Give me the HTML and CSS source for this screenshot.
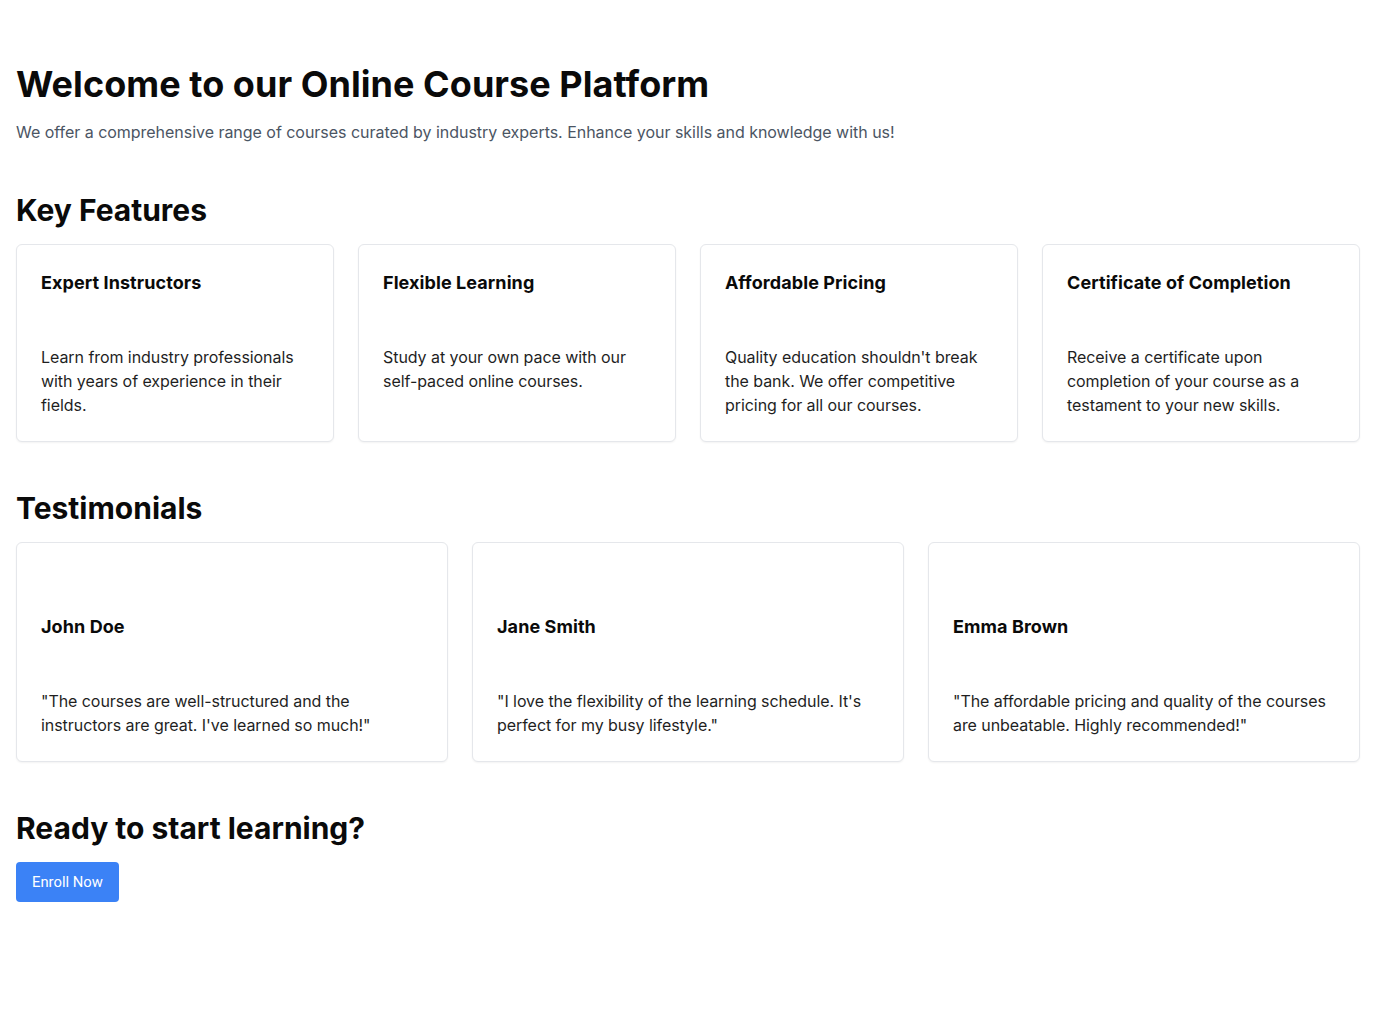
FILE: index.html
```html
<!DOCTYPE html>
<html lang="en">
<head>
<meta charset="utf-8">
<title>Online Course Platform</title>
<link rel="stylesheet" href="styles.css">
</head>
<body>
<main class="page">
  <section class="hero">
    <h1 class="title">Welcome to our Online Course Platform</h1>
    <p class="lead">We offer a comprehensive range of courses curated by industry experts. Enhance your skills and knowledge with us!</p>
  </section>

  <section class="section">
    <h2 class="heading">Key Features</h2>
    <div class="grid grid-4">
      <div class="card">
        <div class="card-header"><h3 class="card-title">Expert Instructors</h3></div>
        <div class="card-content">Learn from industry professionals with years of experience in their fields.</div>
      </div>
      <div class="card">
        <div class="card-header"><h3 class="card-title">Flexible Learning</h3></div>
        <div class="card-content">Study at your own pace with our self-paced online courses.</div>
      </div>
      <div class="card">
        <div class="card-header"><h3 class="card-title">Affordable Pricing</h3></div>
        <div class="card-content">Quality education shouldn't break the bank. We offer competitive pricing for all our courses.</div>
      </div>
      <div class="card">
        <div class="card-header"><h3 class="card-title">Certificate of Completion</h3></div>
        <div class="card-content">Receive a certificate upon completion of your course as a testament to your new skills.</div>
      </div>
    </div>
  </section>

  <section class="section">
    <h2 class="heading">Testimonials</h2>
    <div class="grid grid-3">
      <div class="card">
        <div class="card-header"><span class="avatar"></span><h3 class="card-title">John Doe</h3></div>
        <div class="card-content">"The courses are well-structured and the instructors are great. I've learned so much!"</div>
      </div>
      <div class="card">
        <div class="card-header"><span class="avatar"></span><h3 class="card-title">Jane Smith</h3></div>
        <div class="card-content">"I love the flexibility of the learning schedule. It's perfect for my busy lifestyle."</div>
      </div>
      <div class="card">
        <div class="card-header"><span class="avatar"></span><h3 class="card-title">Emma Brown</h3></div>
        <div class="card-content">"The affordable pricing and quality of the courses are unbeatable. Highly recommended!"</div>
      </div>
    </div>
  </section>

  <section class="section">
    <h2 class="heading">Ready to start learning?</h2>
    <button class="btn" type="button">Enroll Now</button>
  </section>
</main>
</body>
</html>
```

FILE: styles.css
```css
* { box-sizing: border-box; }
html, body { margin: 0; padding: 0; background: #fff; }
body {
  font-family: Inter, "Noto Sans", sans-serif;
  color: #0a0a0a;
}
.page {
  padding: 64px 16px 48px;
  display: flex;
  flex-direction: column;
  gap: 48px;
}
.title {
  margin: 0 0 16px;
  font-size: 36px;
  line-height: 40px;
  font-weight: 700;
  letter-spacing: 0.05px;
}
.lead {
  margin: 0;
  font-size: 16px;
  line-height: 24px;
  color: #4b5563;
  letter-spacing: -0.03px;
}
.heading {
  margin: 0 0 16px;
  font-size: 30px;
  line-height: 36px;
  font-weight: 700;
}
.grid { display: grid; gap: 24px; }
.grid-4 { grid-template-columns: repeat(4, 1fr); }
.grid-3 { grid-template-columns: repeat(3, 1fr); }
.card {
  border: 1px solid #e5e7eb;
  border-radius: 6px;
  background: #fff;
  box-shadow: 0 1px 2px rgba(0,0,0,0.05);
}
.card-header {
  padding: 24px;
  display: flex;
  flex-direction: column;
  gap: 6px;
}
.avatar { display: block; height: 40px; }
.card-title {
  margin: 0;
  font-size: 18px;
  line-height: 28px;
  font-weight: 700;
  letter-spacing: 0.08px;
  color: #0a0a0a;
}
.card-content {
  padding: 24px;
  font-size: 16px;
  line-height: 24px;
  letter-spacing: -0.06px;
  color: #1f1f1f;
}
.btn {
  align-self: flex-start;
  height: 40px;
  padding: 0 16px;
  border: 0;
  border-radius: 4px;
  background: #3b82f6;
  color: #fff;
  font-family: Roboto, "Liberation Sans", sans-serif;
  font-size: 14.8px;
  cursor: pointer;
}
```
